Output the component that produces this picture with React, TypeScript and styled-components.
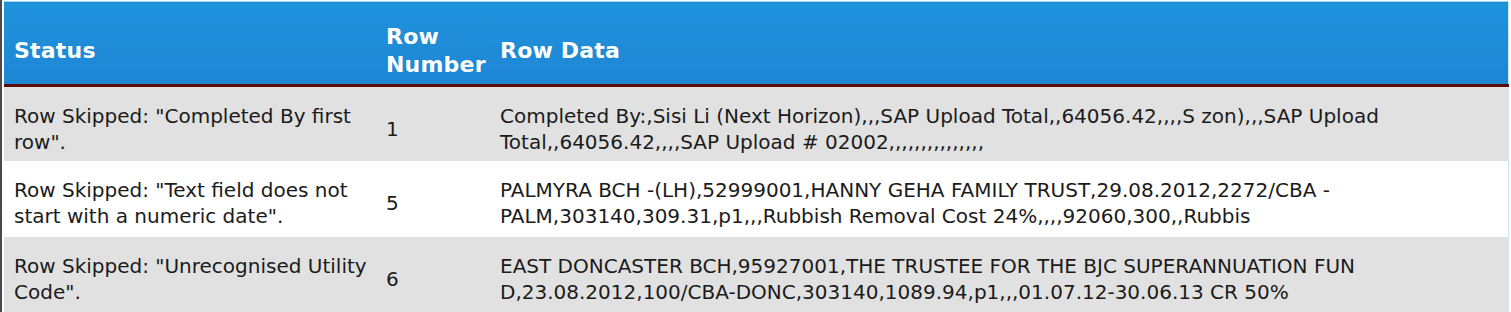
import React from "react";
import styled, { createGlobalStyle } from "styled-components";

const GlobalStyle = createGlobalStyle`
    html, body {
        margin: 0;
        padding: 0;
        background: #ffffff;
    }
`

const Frame = styled.div`
    display: flex;
    width: 1511px;
    height: 312px;
    box-sizing: border-box;
    border-left: 2px solid #4a4a4a;
    padding: 1px 0 0 2px;
    background: #ffffff;
`

const Table = styled.table`
    width: 1504px;
    border-collapse: collapse;
    table-layout: fixed;
    font-family: "DejaVu Sans", Verdana, sans-serif;
    border-top: 1px solid #9fd8ef;
    border-right: 1px solid #c9e6f3;
`

const HeadCell = styled.th<{ width: number }>`
    width: ${p => p.width}px;
    height: 84px;
    padding: 16px 10px 0;
    box-sizing: border-box;
    text-align: left;
    vertical-align: middle;
    color: #ffffff;
    font-size: 22px;
    font-weight: bold;
    line-height: 28px;
    letter-spacing: 0.2px;
    background: linear-gradient(#1f92dc, #1e86d4);
    border-bottom: 3px solid #5c0b0b;
`

const Row = styled.tr<{ striped: boolean }>`
    background: ${p => p.striped ? "#e1e1e1" : "#ffffff"};
`

const Cell = styled.td`
    height: 73px;
    padding: 9px 10px 0;
    box-sizing: border-box;
    vertical-align: middle;
    color: #1b1b1b;
    font-size: 20px;
    line-height: 26px;
`

const Line = styled.span`
    display: block;
    white-space: nowrap;
`

type SkippedRow = { status: string[], number: number, data: string[] }

const rows: SkippedRow[] = [
    {
        status: ['Row Skipped: "Completed By first', 'row".'],
        number: 1,
        data: [
            'Completed By:,Sisi Li (Next Horizon),,,SAP Upload Total,,64056.42,,,,S zon),,,SAP Upload',
            'Total,,64056.42,,,,SAP Upload # 02002,,,,,,,,,,,,,,,',
        ],
    },
    {
        status: ['Row Skipped: "Text field does not', 'start with a numeric date".'],
        number: 5,
        data: [
            'PALMYRA BCH -(LH),52999001,HANNY GEHA FAMILY TRUST,29.08.2012,2272/CBA -',
            'PALM,303140,309.31,p1,,,Rubbish Removal Cost 24%,,,,92060,300,,Rubbis',
        ],
    },
    {
        status: ['Row Skipped: "Unrecognised Utility', 'Code".'],
        number: 6,
        data: [
            'EAST DONCASTER BCH,95927001,THE TRUSTEE FOR THE BJC SUPERANNUATION FUN',
            'D,23.08.2012,100/CBA-DONC,303140,1089.94,p1,,,01.07.12-30.06.13 CR 50%',
        ],
    },
]

const App = () => {
    return (
        <>
            <GlobalStyle />
            <Frame>
                <Table>
                    <thead>
                        <tr>
                            <HeadCell width={372}>Status</HeadCell>
                            <HeadCell width={114}>Row<br />Number</HeadCell>
                            <HeadCell width={1018}>Row Data</HeadCell>
                        </tr>
                    </thead>
                    <tbody>
                        {rows.map((row, i) => (
                            <Row key={row.number} striped={i % 2 === 0}>
                                <Cell>{row.status.map(s => <Line key={s}>{s}</Line>)}</Cell>
                                <Cell>{row.number}</Cell>
                                <Cell>{row.data.map(d => <Line key={d}>{d}</Line>)}</Cell>
                            </Row>
                        ))}
                    </tbody>
                </Table>
            </Frame>
        </>
    )
}

export default App;
